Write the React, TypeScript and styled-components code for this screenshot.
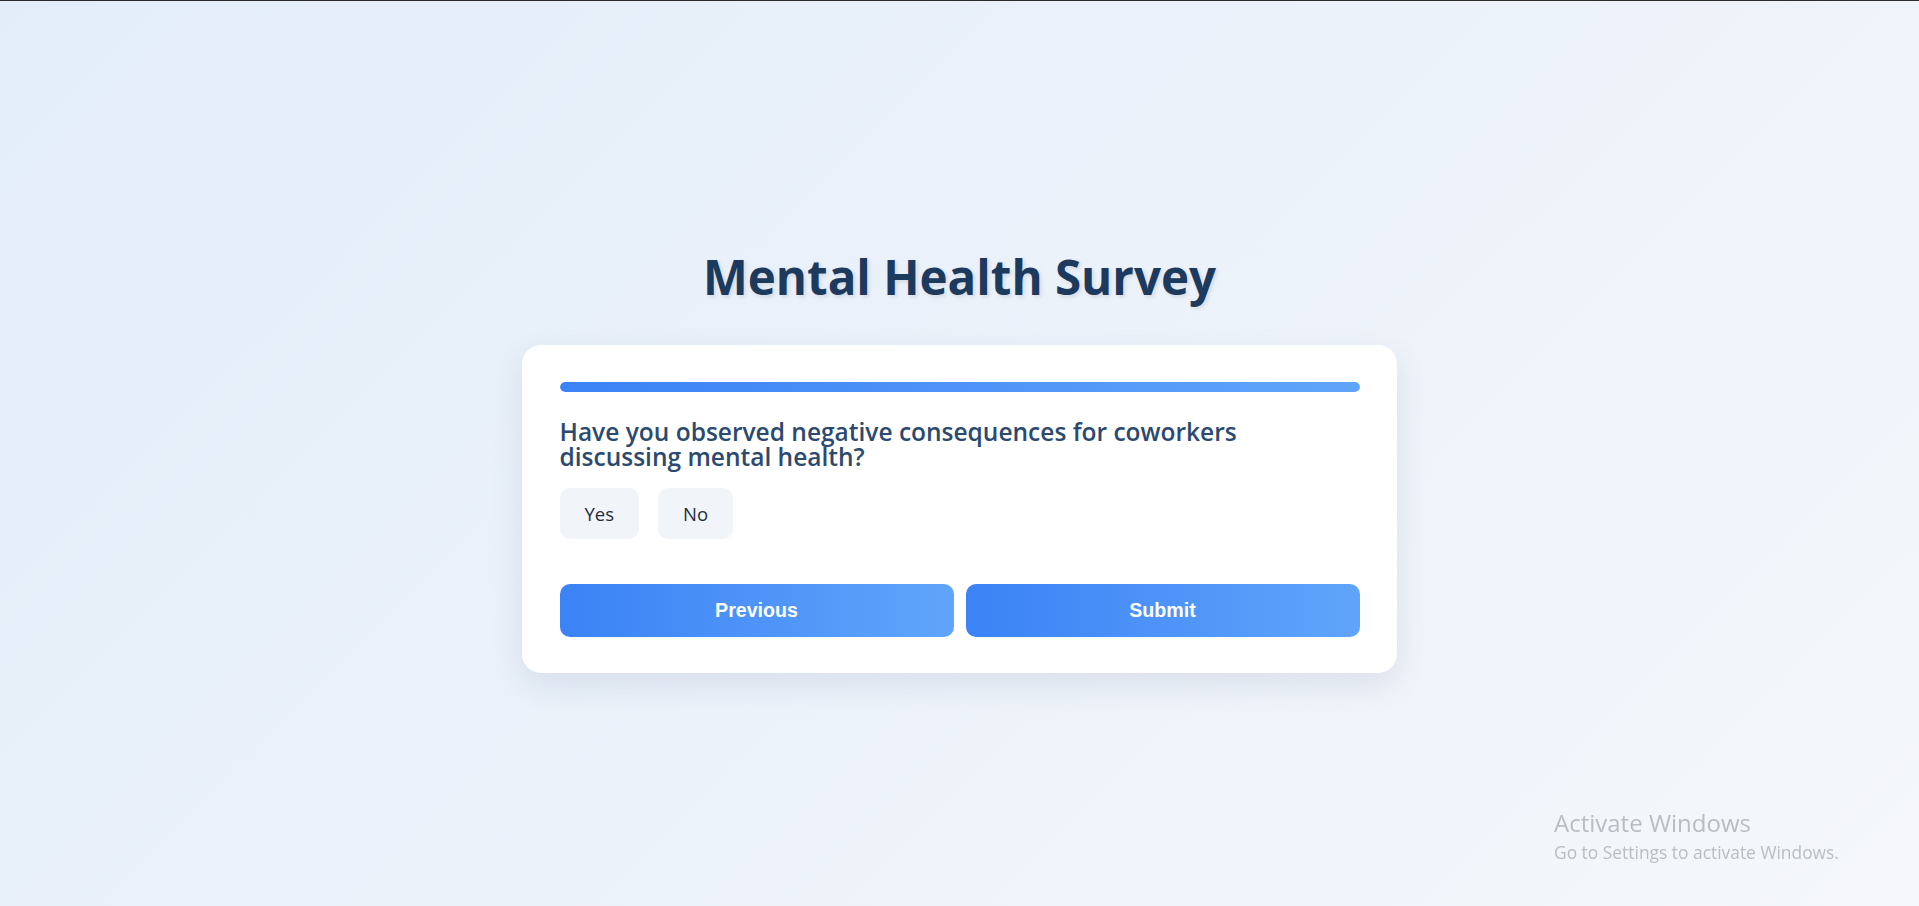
import React, { useState } from "react";
import styled, { createGlobalStyle } from "styled-components";

const GlobalStyle = createGlobalStyle`
  html, body {
    margin: 0;
    padding: 0;
  }
  body {
    font-family: "Open Sans", "Noto Sans", sans-serif;
    border-top: 1px solid #2b2b2b;
    background: linear-gradient(135deg, #e3edf9 0%, #f5f7fb 100%);
    min-height: 905px;
  }
  * { box-sizing: border-box; }
`;

const Page = styled.main`
  min-height: 905px;
  display: flex;
  flex-direction: column;
  align-items: center;
  justify-content: center;
  padding-top: 10px;
`;

const Title = styled.h1`
  margin: 0 0 36px;
  font-size: 47.5px;
  line-height: 64px;
  font-weight: 700;
  color: #1c3a5e;
  text-shadow: 2px 2px 4px rgba(0, 0, 0, 0.1);
`;

const Card = styled.section`
  width: 875px;
  background: #ffffff;
  border-radius: 19px;
  padding: 37px 37.5px 36px;
  box-shadow: 0 12px 32px rgba(30, 58, 95, 0.1);
`;

const Track = styled.div`
  height: 10px;
  border-radius: 5px;
  background: #e5eaf2;
  overflow: hidden;
`;

const Fill = styled.div`
  height: 100%;
  border-radius: 5px;
  background: linear-gradient(90deg, #3b82f6, #60a5fa);
`;

const Question = styled.h2`
  margin: 27px 0 19px;
  max-width: 760px;
  font-size: 24.5px;
  line-height: 25px;
  font-weight: 600;
  color: #2c4a70;
`;

const Options = styled.div`
  display: flex;
  gap: 19px;
  margin-bottom: 45px;
`;

const Option = styled.button<{ $selected?: boolean }>`
  font-family: inherit;
  font-size: 18.5px;
  color: #1f2d3d;
  background: ${(p) => (p.$selected ? "#dbeafe" : "#f1f4f9")};
  border: none;
  border-radius: 10px;
  height: 51px;
  padding: 0 25px;
  cursor: pointer;
`;

const Nav = styled.div`
  display: grid;
  grid-template-columns: 1fr 1fr;
  gap: 12px;
`;

const NavButton = styled.button`
  height: 53px;
  border: none;
  border-radius: 10px;
  background: linear-gradient(90deg, #3b82f6, #60a5fa);
  color: #ffffff;
  font-family: "Liberation Sans", Arial, sans-serif;
  font-weight: 700;
  font-size: 19.6px;
  cursor: pointer;
`;

const Watermark = styled.div`
  position: fixed;
  left: 1554px;
  top: 806px;
  color: #b9bdc4;
  font-family: "Open Sans", sans-serif;
  pointer-events: none;
`;

const WmTitle = styled.div`
  font-size: 24px;
  line-height: 34px;
  font-weight: 400;
`;

const WmSub = styled.div`
  font-size: 17.4px;
  line-height: 24px;
`;

export default function App() {
  const [answer, setAnswer] = useState<string | null>(null);
  return (
    <>
      <GlobalStyle />
      <Page>
        <Title>Mental Health Survey</Title>
        <Card>
          <Track>
            <Fill style={{ width: "100%" }} />
          </Track>
          <Question>
            Have you observed negative consequences for coworkers discussing mental health?
          </Question>
          <Options>
            {["Yes", "No"].map((o) => (
              <Option key={o} $selected={answer === o} onClick={() => setAnswer(o)}>
                {o}
              </Option>
            ))}
          </Options>
          <Nav>
            <NavButton>Previous</NavButton>
            <NavButton>Submit</NavButton>
          </Nav>
        </Card>
      </Page>
      <Watermark>
        <WmTitle>Activate Windows</WmTitle>
        <WmSub>Go to Settings to activate Windows.</WmSub>
      </Watermark>
    </>
  );
}
